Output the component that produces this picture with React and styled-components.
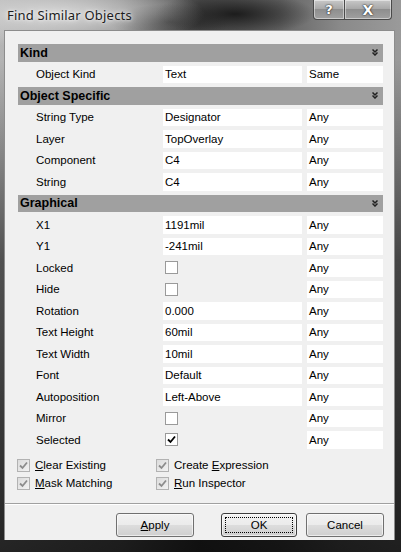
import React from 'react';
import styled, { createGlobalStyle } from 'styled-components';

// --- layout constants
const rowHeight = 17.5;
const rowGap = 4;

const GlobalStyle = createGlobalStyle`
  html, body {
    margin: 0;
    padding: 0;
    background: #1a1a1a;
  }
`;

// --- window frame
const Window = styled.div`
  box-sizing: border-box;
  width: 401px;
  height: 552px;
  display: flex;
  flex-direction: column;
  overflow: hidden;
  background:
    linear-gradient(to bottom, rgba(0, 0, 0, 0) 0, rgba(0, 0, 0, 0) 60px, rgba(0, 0, 0, 0.55) 260px, rgba(0, 0, 0, 0.8) 100%),
    radial-gradient(ellipse 150px 34px at 55px 14px, rgba(215, 215, 215, 1) 0%, rgba(215, 215, 215, 0) 100%),
    radial-gradient(ellipse 80px 22px at 235px 14px, rgba(25, 25, 25, 0.95) 0%, rgba(25, 25, 25, 0) 100%),
    radial-gradient(ellipse 60px 18px at 170px 22px, rgba(40, 40, 40, 0.85) 0%, rgba(40, 40, 40, 0) 100%),
    linear-gradient(to right, #b4b4b4 0%, #8a8a8a 30%, #4e4e4e 50%, #646464 70%, #8a8a8a 85%, #9a9a9a 100%);
`;

const TitleBar = styled.div`
  height: 30px;
  flex: none;
  display: flex;
  align-items: flex-start;
`;

const Title = styled.div`
  padding: 6px 0 0 7px;
  font-family: 'Noto Sans', 'Open Sans', sans-serif;
  font-size: 13px;
  letter-spacing: 0.2px;
  color: #1c1c1c;
  text-shadow: 0 0 6px rgba(255, 255, 255, 0.9), 0 0 3px rgba(255, 255, 255, 0.8);
`;

const CaptionButtons = styled.div`
  margin-left: auto;
  margin-right: 9px;
  display: flex;
`;

const CaptionButton = styled.div`
  box-sizing: border-box;
  width: ${(p) => p.$width}px;
  height: 20px;
  display: flex;
  align-items: center;
  justify-content: center;
  border: 1px solid #4a4a4a;
  border-top: none;
  border-radius: ${(p) => (p.$first ? '0 0 0 4px' : '0 0 4px 0')};
  margin-left: ${(p) => (p.$first ? '0' : '-1px')};
  background: linear-gradient(to bottom, #c8c8c8 0%, #a9a9a9 45%, #8e8e8e 50%, #a0a0a0 100%);
  box-shadow: inset 0 0 0 1px rgba(255, 255, 255, 0.45);
  font-family: 'DejaVu Sans', sans-serif;
  font-weight: bold;
  font-size: ${(p) => p.$size}px;
  color: #fff;
  text-shadow: 0 0 2px #222, 0 0 1px #222;
`;

// --- client area
const Client = styled.div`
  box-sizing: border-box;
  flex: 1;
  min-height: 0;
  margin: 0 6px 12px 4px;
  display: flex;
  flex-direction: column;
  background: #f0f0f0;
  border: 1px solid #8c8c8c;
  border-bottom: none;
  font-family: 'Liberation Sans', Arial, sans-serif;
  font-size: 11.5px;
  color: #000;
`;

const Body = styled.div`
  padding: 13px 11px 0 13px;
  flex: 1;
  min-height: 0;
`;

const Grid = styled.div`
  display: grid;
  grid-template-columns: 145px 139px 81px;
  row-gap: ${rowGap}px;
  grid-auto-rows: ${rowHeight}px;
`;

const Header = styled.div`
  grid-column: 1 / -1;
  display: flex;
  align-items: center;
  padding: 0 5px 0 2px;
  background: #a0a0a0;
  font-weight: bold;
  font-size: 12.5px;
`;

const Label = styled.div`
  display: flex;
  align-items: center;
  padding-left: 18px;
`;

const Cell = styled.div`
  display: flex;
  align-items: center;
  padding-left: 2px;
  margin-left: ${(p) => (p.$match ? '5px' : '0')};
  background: ${(p) => (p.$bare ? 'transparent' : '#fff')};
`;

const Box = styled.span`
  box-sizing: border-box;
  width: 13px;
  height: 13px;
  flex: none;
  display: inline-flex;
  align-items: center;
  justify-content: center;
  border: 1px solid ${(p) => (p.$disabled ? '#b2b2b2' : '#9a9a9a')};
  background: ${(p) =>
    p.$disabled ? 'linear-gradient(135deg, #dcdcdc, #f2f2f2)' : '#fff'};
`;

const Options = styled.div`
  display: grid;
  grid-template-columns: 139px auto;
  grid-auto-rows: 18px;
  margin-left: -1px;
  padding: 7.5px 0 0 0;
`;

const Option = styled.label`
  display: flex;
  align-items: center;
  gap: 5px;
`;

const Key = styled.span`
  text-decoration: underline;
`;

const ButtonBar = styled.div`
  height: 37px;
  box-sizing: border-box;
  flex: none;
  display: flex;
  align-items: flex-end;
  padding: 0 10px 3px 0;
  border-top: 1px solid #a0a0a0;
  box-shadow: inset 0 1px 0 #fff;
`;

const Button = styled.button`
  box-sizing: border-box;
  width: ${(p) => p.$width}px;
  height: 24px;
  margin-left: ${(p) => p.$gap}px;
  padding: 0;
  display: flex;
  align-items: center;
  justify-content: center;
  border: 1px solid ${(p) => (p.$default ? '#3c3c3c' : '#707070')};
  border-radius: 3px;
  background: linear-gradient(to bottom, #f2f2f2 0%, #ebebeb 49%, #dddddd 50%, #cfcfcf 100%);
  box-shadow: inset 0 0 0 1px rgba(255, 255, 255, 0.6);
  font-family: 'Liberation Sans', Arial, sans-serif;
  font-size: 11.5px;
  color: #000;
  &:first-child {
    margin-left: auto;
  }
`;

const Focus = styled.span`
  display: flex;
  align-items: center;
  justify-content: center;
  width: calc(100% - 6px);
  height: calc(100% - 6px);
  border: 1px dotted #000;
  box-sizing: border-box;
`;

// --- drawings
const Chevrons = () => (
  <svg width="6" height="7" viewBox="0 0 6 7" style={{ marginLeft: 'auto' }}>
    <path d="M0.5 0.5 L3 3 L5.5 0.5 M0.5 3.5 L3 6 L5.5 3.5" fill="none" stroke="#202020" strokeWidth="1.5" />
  </svg>
);

const Tick = ({ color }) => (
  <svg width="9" height="9" viewBox="0 0 9 9">
    <path d="M1 4.5 L3.5 7 L8 1.5" fill="none" stroke={color} strokeWidth="1.8" />
  </svg>
);

// --- data
const sections = [
  { title: 'Kind', rows: [['Object Kind', 'Text', 'Same']] },
  {
    title: 'Object Specific',
    rows: [
      ['String Type', 'Designator', 'Any'],
      ['Layer', 'TopOverlay', 'Any'],
      ['Component', 'C4', 'Any'],
      ['String', 'C4', 'Any'],
    ],
  },
  {
    title: 'Graphical',
    rows: [
      ['X1', '1191mil', 'Any'],
      ['Y1', '-241mil', 'Any'],
      ['Locked', false, 'Any'],
      ['Hide', false, 'Any'],
      ['Rotation', '0.000', 'Any'],
      ['Text Height', '60mil', 'Any'],
      ['Text Width', '10mil', 'Any'],
      ['Font', 'Default', 'Any'],
      ['Autoposition', 'Left-Above', 'Any'],
      ['Mirror', false, 'Any'],
      ['Selected', true, 'Any'],
    ],
  },
];

const OptionItem = ({ k, rest }) => (
  <Option>
    <Box $disabled>
      <Tick color="#8c8c8c" />
    </Box>
    <span>{rest[0]}<Key>{k}</Key>{rest[1]}</span>
  </Option>
);

const App = () => (
  <Window>
    <GlobalStyle />
    <TitleBar>
      <Title>Find Similar Objects</Title>
      <CaptionButtons>
        <CaptionButton $first $width={32} $size={13}>?</CaptionButton>
        <CaptionButton $width={48} $size={14}>X</CaptionButton>
      </CaptionButtons>
    </TitleBar>

    <Client>
      <Body>
        <Grid>
          {sections.map((s) => (
            <React.Fragment key={s.title}>
              <Header>
                {s.title}
                <Chevrons />
              </Header>
              {s.rows.map(([label, value, match]) => (
                <React.Fragment key={label}>
                  <Label>{label}</Label>
                  {typeof value === 'boolean' ? (
                    <Cell $bare>
                      <Box>{value && <Tick color="#000" />}</Box>
                    </Cell>
                  ) : (
                    <Cell>{value}</Cell>
                  )}
                  <Cell $match>{match}</Cell>
                </React.Fragment>
              ))}
            </React.Fragment>
          ))}
        </Grid>

        <Options>
          <OptionItem k="C" rest={['', 'lear Existing']} />
          <OptionItem k="E" rest={['Create ', 'xpression']} />
          <OptionItem k="M" rest={['', 'ask Matching']} />
          <OptionItem k="R" rest={['', 'un Inspector']} />
        </Options>
      </Body>

      <ButtonBar>
        <Button $width={78} $gap={0}>
          <span><Key>A</Key>pply</span>
        </Button>
        <Button $width={76} $gap={27} $default>
          <Focus>OK</Focus>
        </Button>
        <Button $width={78} $gap={9}>Cancel</Button>
      </ButtonBar>
    </Client>
  </Window>
);

export default App;
